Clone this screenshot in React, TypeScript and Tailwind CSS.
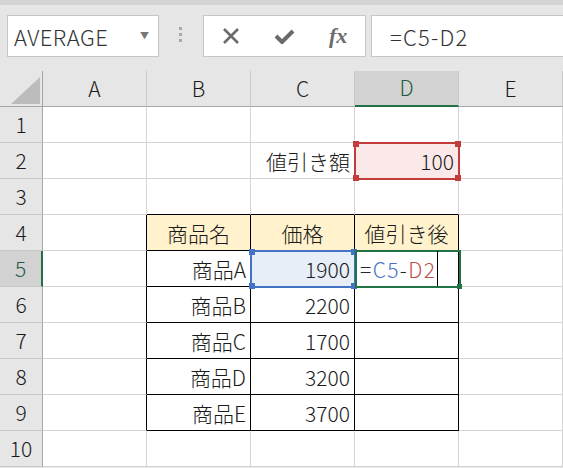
import React from "react";

const cols = ["A", "B", "C", "D", "E"];

type Cell = { text?: React.ReactNode; align?: "left" | "right" | "center"; fill?: string };

const data: Record<number, Record<string, Cell>> = {
  2: { C: { text: "値引き額", align: "right" }, D: { text: "100", align: "right" } },
  4: {
    B: { text: "商品名", align: "center" },
    C: { text: "価格", align: "center" },
    D: { text: "値引き後", align: "center" },
  },
  5: { B: { text: "商品A", align: "right" }, C: { text: "1900", align: "right" } },
  6: { B: { text: "商品B", align: "right" }, C: { text: "2200", align: "right" } },
  7: { B: { text: "商品C", align: "right" }, C: { text: "1700", align: "right" } },
  8: { B: { text: "商品D", align: "right" }, C: { text: "3200", align: "right" } },
  9: { B: { text: "商品E", align: "right" }, C: { text: "3700", align: "right" } },
};

const inTable = (r: number, c: string) => r >= 4 && r <= 9 && ["B", "C", "D"].includes(c);

const Handle = ({ pos, color }: { pos: string; color: string }) => (
  <span className={`absolute w-[6px] h-[6px] ${pos} ${color}`} />
);

const GridCell = ({ r, c }: { r: number; c: string }) => {
  const cell = data[r]?.[c];
  const rightBlack = inTable(r, c) || (c === "A" && r >= 4 && r <= 9);
  const bottomBlack = r >= 3 && r <= 9 && ["B", "C", "D"].includes(c);
  const justify =
    cell?.align === "right" ? "justify-end" : cell?.align === "center" ? "justify-center" : "justify-start";
  const header = r === 4 && inTable(r, c);

  return (
    <div
      className={`relative h-[36px] flex items-center pt-[2px] px-[4px] border-r border-b ${
        rightBlack ? "border-r-black" : "border-r-[#d4d4d4]"
      } ${bottomBlack ? "border-b-black" : "border-b-[#d4d4d4]"} ${justify} ${
        header ? "bg-[#fff2cc]" : "bg-white"
      }`}
    >
      {r === 2 && c === "D" && (
        <div className="absolute z-10 -left-[1px] -top-[1px] w-[106px] h-[38px] border-2 border-[#c43b3b] bg-[#fbe9e9]">
          <Handle pos="-left-[3px] -top-[3px]" color="bg-[#c43b3b]" />
          <Handle pos="-right-[3px] -top-[3px]" color="bg-[#c43b3b]" />
          <Handle pos="-left-[3px] -bottom-[3px]" color="bg-[#c43b3b]" />
          <Handle pos="-right-[3px] -bottom-[3px]" color="bg-[#c43b3b]" />
        </div>
      )}
      {r === 5 && c === "C" && (
        <div className="absolute z-10 -left-[1px] -top-[1px] w-[106px] h-[38px] border-2 border-[#4472c4] bg-[#e8eef8]">
          <Handle pos="-left-[3px] -top-[3px]" color="bg-[#4472c4]" />
          <Handle pos="-right-[3px] -top-[3px]" color="bg-[#4472c4]" />
          <Handle pos="-left-[3px] -bottom-[3px]" color="bg-[#4472c4]" />
          <Handle pos="-right-[3px] -bottom-[3px]" color="bg-[#4472c4]" />
        </div>
      )}
      {r === 5 && c === "D" && (
        <>
          <div className="absolute z-20 left-0 -top-[1px] w-[106px] h-[38px] border-2 border-[#217346]">
            <span className="absolute -right-[3px] -bottom-[3px] w-[5px] h-[5px] bg-[#217346]" />
          </div>
          <span className="relative z-20 flex items-center w-full pl-[1px] tracking-[1.4px]">
            <span className="text-[#262626]">=</span>
            <span className="text-[#4472c4]">C5</span>
            <span className="text-[#262626]">-</span>
            <span className="text-[#c0504d]">D2</span>
            <span className="ml-[1px] w-px h-[35px] -mt-[2px] bg-black" />
          </span>
        </>
      )}
      {cell?.text && <span className="relative z-20 text-[#1a1a1a] whitespace-nowrap">{cell.text}</span>}
    </div>
  );
};

export default function App() {
  const rows = [1, 2, 3, 4, 5, 6, 7, 8, 9, 10];
  return (
    <div
      className="w-[563px] h-[468px] overflow-hidden bg-[#e6e6e6] font-light"
      style={{ fontFamily: '"Noto Sans CJK JP", "Noto Sans", sans-serif' }}
    >
      {/* toolbar */}
      <div className="h-[71px] border-t-[5px] border-[#d4d4d4] pt-[10px] flex items-start">
        <div className="ml-[7px] w-[152px] h-[42px] border border-[#c6c6c6] bg-white flex items-center pl-[6px] pr-[9px]">
          <span className="text-[22px] text-[#333] tracking-[0.5px] pt-[1px]">AVERAGE</span>
          <span className="ml-auto text-[9px] text-[#777]">▼</span>
        </div>
        <div className="ml-[20px] mt-[12px] flex flex-col gap-[3px]">
          <span className="w-[3px] h-[3px] bg-[#a8a8a8]" />
          <span className="w-[3px] h-[3px] bg-[#a8a8a8]" />
          <span className="w-[3px] h-[3px] bg-[#a8a8a8]" />
        </div>
        <div className="ml-[21px] w-[163px] h-[42px] border border-[#c6c6c6] bg-white flex items-center">
          <span className="w-[54px] flex justify-center">
            <svg width="18" height="16" viewBox="0 0 18 16">
              <path d="M2 1 L16 15 M16 1 L2 15" stroke="#6b6b6b" strokeWidth="2.6" fill="none" />
            </svg>
          </span>
          <span className="w-[54px] flex justify-center">
            <svg width="21" height="17" viewBox="0 0 21 17">
              <path d="M2 8 L8 14 L19 3" stroke="#6b6b6b" strokeWidth="4" fill="none" strokeLinejoin="round" />
            </svg>
          </span>
          <span
            className="w-[54px] flex justify-center italic font-bold text-[22px] text-[#6b6b6b] -mt-[2px]"
            style={{ fontFamily: '"Liberation Serif", serif' }}
          >
            fx
          </span>
        </div>
        <div className="ml-[5px] flex-1 -mr-[4px] h-[42px] border border-[#c6c6c6] bg-white flex items-center pl-[18px]">
          <span className="text-[22px] text-[#333] pt-[1px] tracking-[1.2px]">=C5-D2</span>
        </div>
      </div>

      {/* sheet */}
      <div className="grid grid-cols-[43px_104px_104px_104px_104px_104px] text-[21px]">
        <div className="relative h-[36px] border-r border-b border-r-[#a6a6a6] border-b-[#a6a6a6] bg-[#e6e6e6]">
          <svg className="absolute left-[11px] top-[6px]" width="30" height="28" viewBox="0 0 30 28">
            <polygon points="0,27 29,27 29,0" fill="#bcbcbc" />
          </svg>
        </div>
        {cols.map((c) => (
          <div
            key={c}
            className={`h-[36px] flex items-center justify-center border-r border-r-[#c8c8c8] ${
              c === "D"
                ? "bg-[#d2d2d2] border-b-2 border-b-[#217346] text-[#1f5c43]"
                : "bg-[#e6e6e6] border-b border-b-[#a6a6a6] text-[#1a1a1a]"
            }`}
          >
            {c}
          </div>
        ))}
        {rows.map((r) => (
          <React.Fragment key={r}>
            <div
              className={`h-[36px] flex items-center justify-center border-b border-b-[#c8c8c8] ${
                r === 5
                  ? "bg-[#d2d2d2] border-r-2 border-r-[#217346] text-[#1f5c43]"
                  : "bg-[#e6e6e6] border-r border-r-[#a6a6a6] text-[#1a1a1a]"
              }`}
            >
              {r}
            </div>
            {cols.map((c) => (
              <GridCell key={c} r={r} c={c} />
            ))}
          </React.Fragment>
        ))}
      </div>
    </div>
  );
}
